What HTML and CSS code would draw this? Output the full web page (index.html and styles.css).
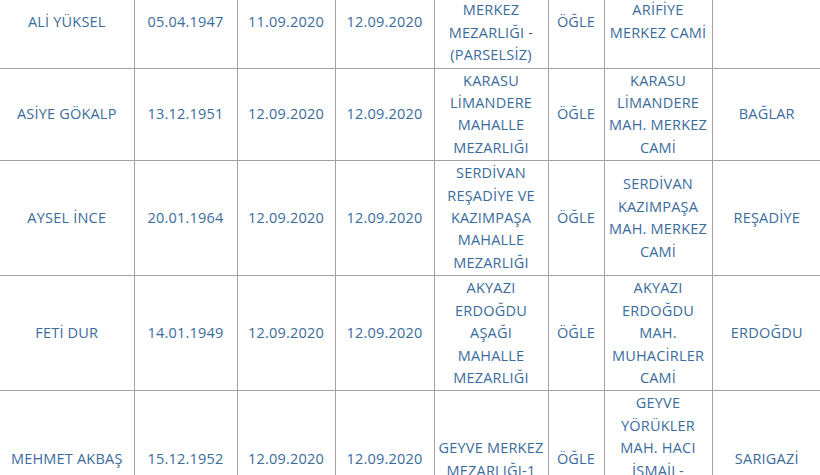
FILE: index.html
```html
<!DOCTYPE html>
<html lang="tr">
<head>
<meta charset="utf-8">
<title>Vefat Listesi</title>
<link rel="stylesheet" href="styles.css">
</head>
<body>
<table class="list">
  <colgroup>
    <col class="c-name"><col class="c-date"><col class="c-date2"><col class="c-date3">
    <col class="c-place"><col class="c-time"><col class="c-mosque"><col class="c-hood">
  </colgroup>
  <tbody>
    <tr>
      <td>ALİ YÜKSEL</td><td>05.04.1947</td><td>11.09.2020</td><td>12.09.2020</td>
      <td>ARİFİYE<br>MERKEZ MEZARLIĞI - (PARSELSİZ)</td><td>ÖĞLE</td><td>ARİFİYE MERKEZ CAMİ</td><td></td>
    </tr>
    <tr>
      <td>ASİYE GÖKALP</td><td>13.12.1951</td><td>12.09.2020</td><td>12.09.2020</td>
      <td>KARASU LİMANDERE MAHALLE MEZARLIĞI</td><td>ÖĞLE</td><td>KARASU LİMANDERE MAH. MERKEZ CAMİ</td><td>BAĞLAR</td>
    </tr>
    <tr>
      <td>AYSEL İNCE</td><td>20.01.1964</td><td>12.09.2020</td><td>12.09.2020</td>
      <td>SERDİVAN REŞADİYE VE KAZIMPAŞA MAHALLE MEZARLIĞI</td><td>ÖĞLE</td><td>SERDİVAN KAZIMPAŞA MAH. MERKEZ CAMİ</td><td>REŞADİYE</td>
    </tr>
    <tr>
      <td>FETİ DUR</td><td>14.01.1949</td><td>12.09.2020</td><td>12.09.2020</td>
      <td>AKYAZI ERDOĞDU AŞAĞI MAHALLE MEZARLIĞI</td><td>ÖĞLE</td><td>AKYAZI ERDOĞDU MAH. MUHACİRLER CAMİ</td><td>ERDOĞDU</td>
    </tr>
    <tr>
      <td>MEHMET AKBAŞ</td><td>15.12.1952</td><td>12.09.2020</td><td>12.09.2020</td>
      <td>GEYVE MERKEZ MEZARLIĞI-1</td><td>ÖĞLE</td><td>GEYVE YÖRÜKLER MAH. HACI İSMAİL-<br>HAKKI<br>CAMİ</td><td>SARIGAZİ</td>
    </tr>
  </tbody>
</table>
</body>
</html>
```

FILE: styles.css
```css
html, body {
  margin: 0;
  padding: 0;
  background: #ffffff;
  overflow: hidden;
}

.list {
  margin-top: -25px;
  border-collapse: collapse;
  table-layout: fixed;
  width: 821px;
  font-family: "Open Sans", "Noto Sans", "DejaVu Sans", sans-serif;
  font-size: 14.5px;
  line-height: 22.4px;
  letter-spacing: 0.2px;
  color: #3a6c9c;
}

.c-name { width: 134px; }
.c-date { width: 103px; }
.c-date2 { width: 98px; }
.c-date3 { width: 99px; }
.c-place { width: 114px; }
.c-time { width: 56px; }
.c-mosque { width: 108px; }
.c-hood { width: 109px; }

.list td {
  border: 1px solid #a3a3a3;
  padding: 1px 2px;
  text-align: center;
  vertical-align: middle;
  word-wrap: break-word;
}

.list tr td:first-child { border-left: none; }
.list tr td:last-child { border-right: none; }
```
